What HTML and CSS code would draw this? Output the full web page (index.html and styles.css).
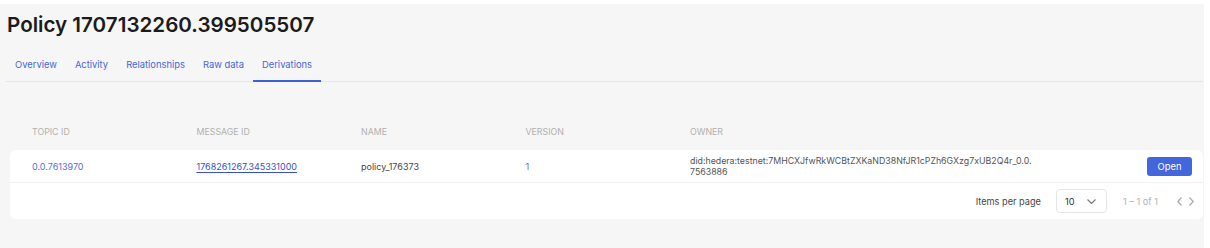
FILE: index.html
```html
<!DOCTYPE html>
<html lang="en">
<head>
  <meta charset="UTF-8" />
  <title>Policy 1707132260.399505507</title>
  <link rel="stylesheet" href="styles.css">
</head>
<body>
  <div class="topbar"></div>
  <div class="page">
    <h1 class="title">Policy 1707132260.399505507</h1>

    <!-- Abas -->
    <nav class="tabs">
      <a class="tab">Overview</a>
      <a class="tab">Activity</a>
      <a class="tab">Relationships</a>
      <a class="tab">Raw data</a>
      <a class="tab active">Derivations</a>
    </nav>

    <!-- Tabela de derivações -->
    <div class="grid head">
      <div>TOPIC ID</div>
      <div>MESSAGE ID</div>
      <div>NAME</div>
      <div>VERSION</div>
      <div>OWNER</div>
      <div></div>
    </div>

    <div class="card">
      <div class="grid row">
        <div class="link">0.0.7613970</div>
        <div class="link strong">1768261267.345331000</div>
        <div>policy_176373</div>
        <div class="link">1</div>
        <div class="owner">did:hedera:testnet:7MHCXJfwRkWCBtZXKaND38NfJR1cPZh6GXzg7xUB2Q4r_0.0.<br>7563886</div>
        <div class="action"><button class="open">Open</button></div>
      </div>
      <div class="paginator">
        <span class="per-page">Items per page</span>
        <div class="select">
          <span>10</span>
          <svg width="9" height="5" viewBox="0 0 9 5"><path d="M0.5 0.5l4 4 4-4" fill="none" stroke="#777" stroke-width="1.1"/></svg>
        </div>
        <span class="range">1 – 1 of 1</span>
        <div class="arrows">
          <svg width="5" height="9" viewBox="0 0 5 9"><path d="M4.5 0.5L0.8 4.5l3.7 4" fill="none" stroke="#aaa" stroke-width="1.2"/></svg>
          <svg width="5" height="9" viewBox="0 0 5 9"><path d="M0.5 0.5l3.7 4-3.7 4" fill="none" stroke="#aaa" stroke-width="1.2"/></svg>
        </div>
      </div>
    </div>
  </div>
</body>
</html>
```

FILE: styles.css
```css
/* Estilos gerais */
body {
  margin: 0;
  font-family: Inter, "Open Sans", sans-serif;
  background: #fff;
  color: #333;
}

.topbar {
  height: 4px;
  background: #fff;
}

.page {
  width: 1204px;
  min-height: 244px;
  box-sizing: border-box;
  padding: 0 1px 0 6px;
  background: #f6f6f6;
}

.title {
  margin: 0 0 0 1px;
  padding-top: 8px;
  font-size: 20.6px;
  font-weight: 600;
  line-height: 26px;
  color: #1b1b1b;
}

/* Abas */
.tabs {
  display: flex;
  margin-top: 12px;
  border-bottom: 1px solid #e6e6e6;
}

.tab {
  padding: 0 9px;
  height: 32px;
  line-height: 30px;
  font-size: 9.4px;
  color: #4766d8;
  border-bottom: 2px solid transparent;
  margin-bottom: -1px;
  box-sizing: border-box;
}

.tab.active {
  border-bottom-color: #3f5fd6;
}

/* Tabela */
.grid {
  display: grid;
  grid-template-columns: 164.5px 164.5px 164.5px 164.5px 1fr 80px;
  padding-left: 22px;
  align-items: center;
}

.head {
  margin: 0 0 0 4px;
  height: 68px;
  padding-top: 30px;
  box-sizing: border-box;
  font-size: 8.8px;
  color: #b0b0b0;
}

.card {
  margin: 0 0 0 4px;
  background: #fff;
  border-radius: 6px;
}

.row {
  height: 33px;
  font-size: 9px;
  color: #444;
  border-bottom: 1px solid #f1f1f1;
  box-sizing: border-box;
}

.link {
  color: #5670dd;
}

.link.strong {
  color: #3a4fc8;
  text-decoration: underline;
  text-underline-offset: 2px;
}

.owner {
  line-height: 11px;
  color: #555;
  font-size: 8.8px;
}

.action {
  display: flex;
  justify-content: flex-end;
  padding-right: 11px;
}

.open {
  width: 45px;
  height: 19px;
  border: none;
  border-radius: 3px;
  background: #4466dd;
  color: #fff;
  font-family: inherit;
  font-size: 9.4px;
  padding: 0;
}

/* Paginação */
.paginator {
  display: flex;
  justify-content: flex-end;
  align-items: center;
  height: 36px;
  padding-right: 9px;
  font-size: 9.2px;
}

.per-page {
  color: #444;
  margin-right: 15px;
}

.select {
  display: flex;
  align-items: center;
  justify-content: space-between;
  box-sizing: border-box;
  width: 51px;
  height: 24px;
  padding: 0 10px 0 8px;
  border: 1px solid #e6e6e6;
  border-radius: 4px;
  color: #333;
}

.range {
  color: #b3b3b3;
  margin: 0 19px 0 16px;
}

.arrows {
  display: flex;
  gap: 7px;
}
```
